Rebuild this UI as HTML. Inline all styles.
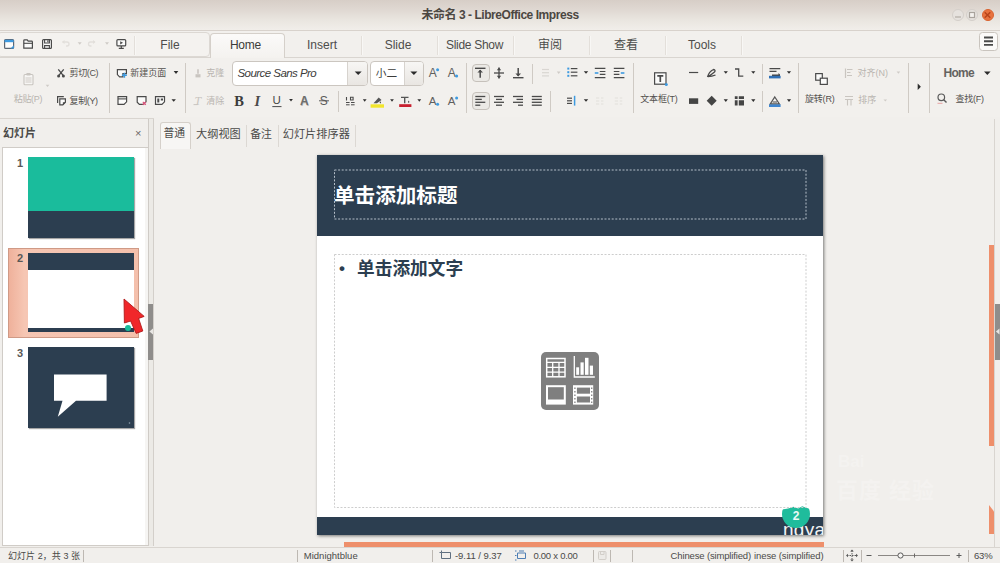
<!DOCTYPE html>
<html lang="zh-CN">
<head>
<meta charset="utf-8">
<title>未命名 3 - LibreOffice Impress</title>
<style>
*{box-sizing:border-box;margin:0;padding:0}
html,body{width:1000px;height:563px;overflow:hidden;background:#f1efec}
body{position:relative;font-family:"Liberation Sans","Noto Sans CJK SC",sans-serif;font-size:11px;color:#4a4a48}
.abs{position:absolute}
#titlebar{left:0;top:0;width:1000px;height:31px;background:linear-gradient(#d7cec7,#e0d9d3 35%,#e9e5df 65%,#f1eeea);border-bottom:1px solid #d8d2cc}
#title{left:0;top:7px;width:1000px;text-align:center;font-weight:bold;font-size:12px;color:#4c4742;letter-spacing:-.45px;line-height:16px}
.wc{width:12px;height:12px;border-radius:50%;top:9px}
#tabbar{left:0;top:31px;width:1000px;height:27px;background:#f2f0ed}
#qa{left:-3px;top:32px;width:213px;height:25px;border:1px solid #dcd8d3;border-radius:4px;background:#f4f2ef}
.tab{top:33.5px;height:24px;line-height:23px;text-align:center;font-size:12px;color:#4d4d4b;width:76px}
.tabsep{top:36px;width:2px;height:19px;background:linear-gradient(90deg,#e3dfda 50%,#f8f7f5 50%)}
#hometab{left:210px;top:32.5px;width:75px;height:25.5px;background:linear-gradient(#fbfaf9,#f4f2ef);border:1px solid #d5d0ca;border-bottom:none;border-radius:4px 4px 0 0;line-height:23px;text-align:left;padding-left:19px;letter-spacing:-.3px;font-size:12px;color:#3c3c3a}
#tabline{left:0;top:57px;width:1000px;height:1px;background:#d9d5d0}
#toolbar{left:0;top:58px;width:1000px;height:59px;background:#f2f0ed}
#tbline{left:0;top:118px;width:154px;height:1px;background:#d9d5d0}
.vsep{width:1px;background:#cfcac4}
.lbl{font-size:9px;color:#53514e;white-space:nowrap;line-height:12px}
.dis{color:#b9b5b0}

.combo{background:#fff;border:1px solid #cbc6c0;border-radius:4px}
.cbtn{position:absolute;right:0;top:0;bottom:0;border-left:1px solid #d7d3ce;background:linear-gradient(#f7f6f4,#e9e6e2);border-radius:0 3px 3px 0}
.pressed{background:#ebe9e5;border:1px solid #c6c1bb;border-radius:4px}
.num{font-size:11px;font-weight:bold;color:#5a5856;width:12px;text-align:center;line-height:16px}
.thumb{width:106px;height:81px;box-shadow:1px 1px 1px rgba(0,0,0,.35)}
.vt{top:126px;font-size:11.2px;color:#4a4a48;line-height:16px;white-space:nowrap}
.st{top:549px;font-size:9.5px;color:#4a4a48;line-height:14px;white-space:nowrap}
.ssep{top:550px;width:1px;height:12px;background:#bdb8b2}
</style>
</head>
<body>
<!-- title bar -->
<div id="titlebar" class="abs"></div>
<div id="title" class="abs">未命名 3 - LibreOffice Impress</div>
<div class="abs wc" style="left:951.6px;background:#e6e2de;border:1px solid #d4cfca"></div>
<div class="abs wc" style="left:966px;background:#e6e2de;border:1px solid #d4cfca"></div>
<div class="abs wc" style="left:981.6px;background:#e8733f;border:1px solid #d9622f"></div>

<!-- tab bar -->
<div id="tabbar" class="abs"></div>
<div id="qa" class="abs"></div>
<div id="tabline" class="abs"></div>
<div class="abs tab" style="left:132px">File</div>
<div id="hometab" class="abs">Home</div>
<div class="abs tab" style="left:284px">Insert</div>
<div class="abs tab" style="left:360px">Slide</div>
<div class="abs tab" style="left:436.5px;letter-spacing:-.3px">Slide Show</div>
<div class="abs tab" style="left:512px">审阅</div>
<div class="abs tab" style="left:588px">查看</div>
<div class="abs tab" style="left:664px">Tools</div>

<div class="abs tabsep" style="left:133.5px"></div><div class="abs tabsep" style="left:361px"></div><div class="abs tabsep" style="left:437px"></div><div class="abs tabsep" style="left:513px"></div><div class="abs tabsep" style="left:589px"></div><div class="abs tabsep" style="left:665px"></div><div class="abs tabsep" style="left:741px"></div>
<!-- toolbar -->
<div id="toolbar" class="abs"></div>
<div id="tbline" class="abs"></div>
<div class="abs vsep" style="left:109px;top:63px;height:50px"></div>
<div class="abs vsep" style="left:185px;top:63px;height:50px"></div>
<div class="abs vsep" style="left:338px;top:91px;height:21px"></div>
<div class="abs vsep" style="left:466px;top:63px;height:50px"></div>
<div class="abs vsep" style="left:532px;top:64px;height:20px"></div>
<div class="abs vsep" style="left:550px;top:91px;height:21px"></div>
<div class="abs vsep" style="left:633px;top:63px;height:50px"></div>
<div class="abs vsep" style="left:762px;top:64px;height:20px"></div>
<div class="abs vsep" style="left:762px;top:91px;height:21px"></div>
<div class="abs vsep" style="left:798px;top:63px;height:50px"></div>
<div class="abs vsep" style="left:908px;top:63px;height:50px"></div>
<div class="abs vsep" style="left:929px;top:63px;height:50px"></div>

<div class="abs lbl dis" style="left:13.8px;top:92.5px;letter-spacing:-0.35px">粘贴(P)</div>
<div class="abs lbl" style="left:69.6px;top:67px;letter-spacing:-0.4px">剪切(C)</div>
<div class="abs lbl" style="left:69.6px;top:95px;letter-spacing:-0.4px">复制(Y)</div>
<div class="abs lbl" style="left:130.2px;top:66.5px">新建页面</div>
<div class="abs lbl dis" style="left:206.2px;top:67px">克隆</div>
<div class="abs lbl dis" style="left:206.2px;top:95px">清除</div>
<div class="abs lbl" style="left:640.3px;top:92.5px;letter-spacing:-0.2px">文本框(T)</div>
<div class="abs lbl" style="left:805px;top:92.5px;letter-spacing:-0.2px">旋转(R)</div>
<div class="abs lbl dis" style="left:857.6px;top:67px">对齐(N)</div>
<div class="abs lbl dis" style="left:858.2px;top:94px">排序</div>
<div class="abs lbl" style="left:955.6px;top:92.5px;letter-spacing:-0.3px">查找(F)</div>
<div class="abs" style="left:943.5px;top:66px;font-size:12px;font-weight:bold;color:#656361;line-height:14px;letter-spacing:-.7px">Home</div>

<!-- font boxes -->
<div class="abs combo" style="left:232px;top:61px;width:136px;height:25px"><span class="cbtn" style="width:20px"></span></div>
<div class="abs" style="left:237.5px;top:66px;font-size:11.5px;font-style:italic;color:#3c3c3a;line-height:14px;letter-spacing:-.55px">Source Sans Pro</div>
<div class="abs combo" style="left:370px;top:61px;width:54px;height:25px"><span class="cbtn" style="width:19px"></span></div>
<div class="abs" style="left:375.8px;top:66px;font-size:10.7px;color:#3c3c3a;line-height:14px">小二</div>

<!-- pressed buttons -->
<div class="abs pressed" style="left:472px;top:64px;width:18px;height:18px"></div>
<div class="abs pressed" style="left:472px;top:92px;width:18px;height:18px"></div>

<!-- slide panel -->
<div class="abs" style="left:0;top:119px;width:155px;height:428px;background:#f1efec"></div>
<div class="abs" style="left:1.5px;top:147px;width:147px;height:398.5px;background:linear-gradient(90deg,#fff 142.5px,#f6f5f3 142.5px);border:1px solid #d0ccc7"></div>
<div class="abs" style="left:148px;top:119px;width:6px;height:427px;background:#eceae6;border-left:1px solid #cfcbc6;border-right:1px solid #d3cfca"></div>
<div class="abs" style="left:3px;top:125px;font-size:11px;font-weight:bold;color:#4a4a48;line-height:16px">幻灯片</div>
<div class="abs" style="left:135px;top:125px;font-size:11px;color:#6a6866;line-height:16px">×</div>

<!-- thumb 1 -->
<div class="abs num" style="left:14px;top:155px">1</div>
<div class="abs thumb" style="left:28px;top:157px;background:#2c3e50"><div class="abs" style="left:0;top:0;width:106px;height:54px;background:#1abc9c"></div></div>
<!-- thumb 2 selected -->
<div class="abs" style="left:8px;top:248px;width:131px;height:89.5px;background:linear-gradient(90deg,#efb19b,#f6c6b3 12%,#f4c0ac);border:1.5px solid #cf9a86"></div>
<div class="abs num" style="left:14px;top:250px">2</div>
<div class="abs thumb" style="left:28px;top:253px;height:79px;background:#fff;box-shadow:none"><div class="abs" style="left:0;top:0;width:106px;height:16.5px;background:#2c3e50"></div><div class="abs" style="left:0;top:75px;width:106px;height:4px;background:#2c3e50"></div><div class="abs" style="left:97px;top:72px;width:6px;height:6px;border-radius:50%;background:#1abc9c"></div></div>
<!-- thumb 3 -->
<div class="abs num" style="left:14px;top:345px">3</div>
<div class="abs thumb" style="left:28px;top:347px;background:#2c3e50"></div>
<!-- panel handle -->
<div class="abs" style="left:148px;top:304px;width:5px;height:56px;background:#8f8d8b"></div>

<!-- view tabs -->
<div class="abs" style="left:160px;top:121.5px;width:31px;height:27.5px;background:#f7f6f4;border:1px solid #d5d0ca;border-bottom:none;border-radius:3px 3px 0 0"></div>
<div class="abs vt" style="left:163.4px;font-size:10.8px;top:125px">普通</div>
<div class="abs vt" style="left:196px">大纲视图</div>
<div class="abs vt" style="left:250.3px;font-size:10.8px">备注</div>
<div class="abs vt" style="left:282.7px">幻灯片排序器</div>
<div class="abs" style="left:246px;top:125px;width:1px;height:22px;background:#dcd8d3"></div>
<div class="abs" style="left:278px;top:125px;width:1px;height:22px;background:#dcd8d3"></div>
<div class="abs" style="left:354.5px;top:125px;width:1px;height:22px;background:#dcd8d3"></div>

<!-- edit area -->
<div class="abs" style="left:317px;top:155px;width:506px;height:380px;background:#fff;box-shadow:1px 1px 3px rgba(0,0,0,.5)"></div>
<div class="abs" style="left:317px;top:155px;width:506px;height:81px;background:#2c3e50"></div>
<div class="abs" style="left:317px;top:517px;width:506px;height:18px;background:#2c3e50;overflow:hidden"><div class="abs" style="left:466px;top:3.5px;font-size:19px;color:#f4f4f4;line-height:18px;letter-spacing:.3px;white-space:nowrap">ngyan</div></div>

<div class="abs" style="left:334px;top:182px;font-size:20.6px;font-weight:bold;color:#fff;line-height:28px;white-space:nowrap">单击添加标题</div>

<div class="abs" style="left:339px;top:256px;font-size:17px;font-weight:bold;color:#2c3e50;line-height:26px">•</div>
<div class="abs" style="left:357px;top:256.3px;font-size:17.7px;font-weight:bold;color:#2c3e50;line-height:26px;white-space:nowrap">单击添加文字</div>
<div class="abs" style="left:541px;top:352px;width:58px;height:58px;border-radius:5px;background:#7f7f7f"></div>
<div class="abs" style="left:782px;top:500px;width:28px;height:28px;border-radius:50%;background:#1fbc9c;clip-path:polygon(0 34%,22% 30%,40% 24%,58% 30%,72% 22%,100% 32%,100% 100%,0 100%)"></div>
<div class="abs" style="left:783px;top:508px;width:26px;text-align:center;font-size:12px;font-weight:bold;color:#e8faf6;line-height:16px">2</div>

<div class="abs" style="left:838px;top:452px;font-size:17px;font-weight:bold;color:rgba(255,255,255,.22);line-height:20px;white-space:nowrap">Bai</div><div class="abs" style="left:836px;top:478px;font-size:22px;font-weight:bold;color:rgba(255,255,255,.22);line-height:26px;white-space:nowrap;letter-spacing:1px">百度 经验</div>
<!-- scrollbars -->
<div class="abs" style="left:994px;top:119px;width:1px;height:428px;background:#d9d5d0"></div>
<div class="abs" style="left:989px;top:245px;width:5px;height:201px;background:#ee8f6b"></div>
<div class="abs" style="left:989px;top:505px;width:5px;height:29px;background:#ee8f6b;clip-path:polygon(0 0,100% 22%,100% 100%,0 100%)"></div>
<div class="abs" style="left:995px;top:304px;width:5px;height:56px;background:#8f8d8b"></div>
<div class="abs" style="left:344px;top:542px;width:480px;height:5px;background:#ee8f6b"></div>

<!-- status bar -->
<div class="abs" style="left:0;top:547px;width:1000px;height:16px;background:#f1efec;border-top:1px solid #d9d5d0"></div>
<div class="abs st" style="left:8px;letter-spacing:0.05px;font-size:9px">幻灯片 2，共 3 张</div>
<div class="abs st" style="left:303.8px;letter-spacing:0px">Midnightblue</div>
<div class="abs st" style="left:455px;letter-spacing:-0.05px">-9.11 / 9.37</div>
<div class="abs st" style="left:533.4px;letter-spacing:-0.25px">0.00 x 0.00</div>
<div class="abs st" style="left:670.6px;letter-spacing:-0.15px">Chinese (simplified)</div>
<div class="abs st" style="left:754px;letter-spacing:-0.1px;background:#f1efec">inese (simplified)</div>
<div class="abs st" style="left:974px;letter-spacing:-0.2px">63%</div>
<div class="abs ssep" style="left:83px"></div><div class="abs ssep" style="left:297px"></div>
<div class="abs ssep" style="left:432px"></div>
<div class="abs ssep" style="left:593px"></div>
<div class="abs ssep" style="left:610px"></div>
<div class="abs ssep" style="left:632px"></div>
<div class="abs ssep" style="left:843px"></div>
<div class="abs ssep" style="left:861px"></div>
<div class="abs ssep" style="left:968px"></div>

<!-- ICONS -->
<svg class="abs" style="left:0;top:0" width="1000" height="563" viewBox="0 0 1000 563" fill="none" stroke-linecap="butt">
<!--ICONS-START-->
<path d="M955 17h6" stroke="#bdb7b1" stroke-width="1.5"/>
<rect x="969.5" y="12.5" width="5" height="5" stroke="#a9a39d" stroke-width="1.2" fill="#f4f2ef"/>
<path d="M984.7 12.2l5.6 5.6M990.3 12.2l-5.6 5.6" stroke="#b8441a" stroke-width="1.5"/>
<rect x="979.5" y="32.5" width="18" height="18" rx="3" fill="#fbfaf9" stroke="#c9c4be"/>
<path d="M984 37.5h9M984 41.2h9M984 44.9h9" stroke="#4a4a4a" stroke-width="1.9"/>
<rect x="4.6" y="39.6" width="9" height="8.8" rx="1" stroke="#5b6673" stroke-width="1.2" fill="#fdfdfd"/>
<path d="M4.6 41h9" stroke="#3d9ae0" stroke-width="2.4"/>
<path d="M10.5 48.6l3.3-3.3v3.3z" fill="#3d9ae0"/>
<path d="M23.8 48.2v-7.6q0-.8.8-.8h2.6l1 1.3h3.4q.8 0 .8.8v6.3z" stroke="#4a4a4a" stroke-width="1.2" fill="#fbfbfa"/>
<path d="M23.8 43.3h8.6" stroke="#4a4a4a" stroke-width="1.1"/>
<rect x="42.6" y="39.6" width="8.8" height="8.8" rx="1" stroke="#4a4a4a" stroke-width="1.2" fill="#fbfbfa"/>
<path d="M44.6 39.8v3.2h4.8v-3.2M44.6 48.2v-2.6h4.8v2.6" stroke="#4a4a4a" stroke-width="1.1"/>
<path d="M47.9 40.2v2" stroke="#4a4a4a" stroke-width="1.2"/>
<path d="M62.5 42h4.5q2 0 2 2t-2 2h-1" stroke="#e2dfdb" stroke-width="1.3"/>
<path d="M64.5 40l-2.5 2 2.5 2z" fill="#e2dfdb"/>
<path d="M77.7 42.3h4l-2.0 2.4z" fill="#cfcbc7"/>
<path d="M95 42h-4.500q-2 0 -2 2t2 2h1" stroke="#e2dfdb" stroke-width="1.3"/>
<path d="M93 40l2.500 2 -2.500 2z" fill="#e2dfdb"/>
<path d="M105.0 42.3h4l-2.0 2.4z" fill="#cfcbc7"/>
<rect x="116.9" y="39.6" width="8.8" height="6.3" rx="1" stroke="#4a4a4a" stroke-width="1.2" fill="#fbfbfa"/>
<path d="M120.2 41.2v3.200l2.800-1.600z" fill="#4a4a4a"/>
<path d="M121.300 46v2M118.800 48.400h5" stroke="#4a4a4a" stroke-width="1.2"/>
<rect x="24" y="74.500" width="9" height="10.300" rx="1" stroke="#c9c5c0" stroke-width="1.1" fill="#f7f6f4"/>
<rect x="26.3" y="73" width="4.400" height="2.600" rx=".8" fill="#c9c5c0"/>
<path d="M25.500 78h6M25.500 80h6M25.500 82h6" stroke="#c9c5c0" stroke-width=".9"/>
<path d="M45.7 84.7h3.6l-1.8 2.2z" fill="#cfcbc7"/>
<path d="M58.300 69.300l4.800 6M63.700 69.300l-4.800 6" stroke="#4a4a4a" stroke-width="1.3"/>
<circle cx="58.600" cy="75.900" r="1.500" fill="#4a4a4a"/><circle cx="63.400" cy="75.900" r="1.500" fill="#4a4a4a"/>
<path d="M57.600 103v-6.300h6.200" stroke="#4a4a4a" stroke-width="1.200"/>
<path d="M59.800 98.800h5.600v3.400l-2.600 2.600h-3z" stroke="#4a4a4a" stroke-width="1.200" fill="#fbfbfa"/>
<path d="M62.900 105v-2.700h2.700z" fill="#4a4a4a"/>
<path d="M117.400 69.600h9v4h-3.500v3.200h-3.300l-2.200-2.200z" stroke="#4a4a4a" stroke-width="1.200" fill="#fbfbfa"/>
<path d="M124.400 72.800v5M121.900 75.300h5" stroke="#3d9ae0" stroke-width="1.500"/>
<path d="M173.7 71.1h4.6l-2.3 2.8z" fill="#2e2e2e"/>
<path d="M118 96.600h8.600v5.200l-2.600 2.600h-6z" stroke="#4a4a4a" stroke-width="1.200" fill="#fbfbfa"/>
<path d="M118 98.900h8.600" stroke="#4a4a4a" stroke-width="1.100"/>
<path d="M137.200 96.600h8.800v5.200l-2.600 2.600h-4l-2.200-2.200z" stroke="#4a4a4a" stroke-width="1.200" fill="#fbfbfa"/>
<path d="M142.800 101.800l3 3M145.800 101.800l-3 3" stroke="#e0507a" stroke-width="1.200"/>
<path d="M155.500 96.600h9v5.200l-2.600 2.600h-6.400z" stroke="#4a4a4a" stroke-width="1.200" fill="#fbfbfa"/>
<path d="M157.300 98.500h2v4h-2zM160.800 98.500h2.200v2h-2.200z" fill="#4a4a4a"/>
<path d="M171.5 99.15h4.4l-2.2 2.7z" fill="#2e2e2e"/>
<path d="M198 69.300v4.500" stroke="#c9c5c0" stroke-width="1.600"/>
<path d="M195.500 74.200h5v3.200h-5z" fill="#c9c5c0"/>
<text x="194.500" y="104.800" font-family="Liberation Serif,serif" font-style="italic" font-size="12" fill="#c9c5c0">T</text>
<path d="M193.500 104.600h4" stroke="#c9c5c0" stroke-width="1"/>
<path d="M354.7 71.4h7l-3.5 3.6z" fill="#2b2b2b"/>
<path d="M410.4 71.4h7l-3.5 3.6z" fill="#2b2b2b"/>
<text x="234.200" y="105.800" font-family="Liberation Serif,serif" font-weight="bold" font-size="14.500" fill="#3c3c3c">B</text>
<text x="254.600" y="105.800" font-family="Liberation Serif,serif" font-weight="bold" font-style="italic" font-size="14.500" fill="#4a4a4a">I</text>
<text x="272.500" y="104.300" font-family="Liberation Sans,sans-serif" font-size="11.500" fill="#4a4a4a">U</text>
<path d="M272.300 106.600h9.200" stroke="#4a4a4a" stroke-width="1"/>
<path d="M289.1 99.1h3.8l-1.9 2.4z" fill="#2e2e2e"/>
<text x="300.600" y="105.900" font-family="Liberation Sans,sans-serif" font-weight="bold" font-size="12" fill="#bdbab6">A</text>
<text x="300" y="105.300" font-family="Liberation Sans,sans-serif" font-weight="bold" font-size="12" fill="#6d6d6d">A</text>
<text x="319.800" y="105.300" font-family="Liberation Sans,sans-serif" font-size="12" fill="#5a5a5a">S</text>
<path d="M319 100.800h10" stroke="#5a5a5a" stroke-width="1"/>
<text x="428.8" y="77.3" font-family="Liberation Sans,sans-serif" font-size="12" fill="#5f5f5f">A</text>
<circle cx="437.6" cy="69.8" r="1.500" fill="#3d9ae0"/>
<text x="447.8" y="77.3" font-family="Liberation Sans,sans-serif" font-size="12" fill="#5f5f5f">A</text>
<circle cx="456.6" cy="76" r="1.500" fill="#3d9ae0"/>
<text x="428.8" y="105.3" font-family="Liberation Sans,sans-serif" font-size="11.5" fill="#5f5f5f">A</text>
<circle cx="437.6" cy="104.3" r="1.500" fill="#3d9ae0"/>
<text x="447.8" y="105.3" font-family="Liberation Sans,sans-serif" font-size="11.5" fill="#5f5f5f">A</text>
<circle cx="456.6" cy="98" r="1.500" fill="#3d9ae0"/>
<path d="M346.500 97v3.500M350.500 97.200h2.600v2.800h-2.600z" stroke="#4a4a4a" stroke-width="1.100"/>
<path d="M346 102.500h3.600M351 102.500h3.600M346 104.800h3.600M351 104.800h3.600" stroke="#4a4a4a" stroke-width="1"/>
<path d="M362.8 99.3h3.8l-1.9 2.4z" fill="#2e2e2e"/>
<path d="M373.500 103.300l5.200-5.800 2.800 2.400-4.600 3.400z" fill="#555"/>
<path d="M380.300 101.200q1.600 1.500 0 2.300q-1.400-.8 0-2.300z" fill="#444"/>
<rect x="370.600" y="104.300" width="13.400" height="3.400" fill="#f2e52c"/>
<path d="M390.1 99.3h3.8l-1.9 2.4z" fill="#2e2e2e"/>
<path d="M401 97.400h7.500M404.700 97.400v5.800" stroke="#555" stroke-width="1.400"/>
<path d="M408.700 100.600q1.500 1.500 0 2.500q-1.500-1 0-2.500z" fill="#444"/>
<rect x="399.200" y="104.200" width="12.200" height="2.800" fill="#c8202f"/>
<path d="M417.40000000000003 99.3h3.8l-1.9 2.4z" fill="#2e2e2e"/>
<path d="M475 68.300h10.500" stroke="#4a4a4a" stroke-width="1.400"/><path d="M480.200 70v7.800" stroke="#4a4a4a" stroke-width="1.500"/><path d="M477.400 72.600l2.800-2.900 2.800 2.900z" fill="#4a4a4a"/>
<path d="M494 73h10" stroke="#4a4a4a" stroke-width="1.300"/><path d="M499 67.600v10.800" stroke="#4a4a4a" stroke-width="1.300"/><path d="M496.800 70.200l2.200-2.600 2.200 2.600zM496.800 75.800l2.200 2.600 2.200-2.600z" fill="#4a4a4a"/>
<path d="M513 77.700h10.500" stroke="#4a4a4a" stroke-width="1.400"/><path d="M518.200 68v8" stroke="#4a4a4a" stroke-width="1.500"/><path d="M515.400 73.600l2.800 2.900 2.800-2.900z" fill="#4a4a4a"/>
<path d="M542 69.5h7" stroke="#d9d6d2" stroke-width="1.2"/>
<path d="M542 72.7h7" stroke="#d9d6d2" stroke-width="1.2"/>
<path d="M542 75.9h7" stroke="#d9d6d2" stroke-width="1.2"/>
<path d="M556.8000000000001 71.5h3.8l-1.9 2.4z" fill="#cfcbc7"/>
<rect x="567.300" y="67.6" width="2" height="2" fill="#3d9ae0"/>
<path d="M570.800 68.6h6.600" stroke="#4a4a4a" stroke-width="1.200"/>
<rect x="567.300" y="71.19999999999999" width="2" height="2" fill="#3d9ae0"/>
<path d="M570.800 72.19999999999999h6.600" stroke="#4a4a4a" stroke-width="1.200"/>
<rect x="567.300" y="74.8" width="2" height="2" fill="#3d9ae0"/>
<path d="M570.800 75.8h6.600" stroke="#4a4a4a" stroke-width="1.200"/>
<path d="M583.8 71.15h4.4l-2.2 2.7z" fill="#2e2e2e"/>
<path d="M594.800 68.300h10.600M599.800 71.500h5.600M599.800 74.400h5.600M594.800 77.600h10.600" stroke="#4a4a4a" stroke-width="1.200"/><path d="M594.800 73h3.600" stroke="#3d9ae0" stroke-width="1.600"/>
<path d="M613.800 68.300h10.600M613.800 71.500h5.600M613.800 74.400h5.600M613.800 77.600h10.600" stroke="#4a4a4a" stroke-width="1.200"/><path d="M620.800 73h3.600" stroke="#3d9ae0" stroke-width="1.600"/>
<path d="M475.3 96.5h10" stroke="#4a4a4a" stroke-width="1.3"/>
<path d="M475.3 99.4h6.5" stroke="#4a4a4a" stroke-width="1.3"/>
<path d="M475.3 102.3h10" stroke="#4a4a4a" stroke-width="1.3"/>
<path d="M475.3 105.2h5" stroke="#4a4a4a" stroke-width="1.3"/>
<path d="M494.0 96.5h10" stroke="#4a4a4a" stroke-width="1.3"/>
<path d="M496.0 99.4h6" stroke="#4a4a4a" stroke-width="1.3"/>
<path d="M494.0 102.3h10" stroke="#4a4a4a" stroke-width="1.3"/>
<path d="M496.0 105.2h6" stroke="#4a4a4a" stroke-width="1.3"/>
<path d="M513 96.5h10" stroke="#4a4a4a" stroke-width="1.3"/>
<path d="M516.5 99.4h6.5" stroke="#4a4a4a" stroke-width="1.3"/>
<path d="M513 102.3h10" stroke="#4a4a4a" stroke-width="1.3"/>
<path d="M518 105.2h5" stroke="#4a4a4a" stroke-width="1.3"/>
<path d="M531.8 96.5h10" stroke="#4a4a4a" stroke-width="1.3"/>
<path d="M531.8 99.4h10" stroke="#4a4a4a" stroke-width="1.3"/>
<path d="M531.8 102.3h10" stroke="#4a4a4a" stroke-width="1.3"/>
<path d="M531.8 105.2h10" stroke="#4a4a4a" stroke-width="1.3"/>
<path d="M567 98.2h5" stroke="#4a4a4a" stroke-width="1.2"/>
<path d="M567 100.8h5" stroke="#4a4a4a" stroke-width="1.2"/>
<path d="M567 103.4h5" stroke="#4a4a4a" stroke-width="1.2"/>
<path d="M574.600 95.800v9.800" stroke="#3d9ae0" stroke-width="1.500"/>
<path d="M583.8 99.15h4.4l-2.2 2.7z" fill="#2e2e2e"/>
<path d="M596 98h3.200M601 98h2.400M596 101h3.200M601 101h2.400M596 104h3.200M601 104h2.400" stroke="#e2dfdb" stroke-width="1.100"/>
<path d="M614.800 98h3.200M619.800 98h2.400M614.800 101h3.200M619.800 101h2.400M614.800 104h3.200M619.800 104h2.400" stroke="#e2dfdb" stroke-width="1.100"/>
<rect x="654.600" y="72.800" width="11.400" height="11.400" stroke="#4a4a4a" stroke-width="1.200" fill="#fbfbfa"/>
<path d="M657.300 75.800h6M660.300 75.800v6.200" stroke="#4a4a4a" stroke-width="1.700"/>
<circle cx="666.300" cy="84.500" r="1.500" fill="#3d9ae0"/>
<path d="M689 72.500h9.200" stroke="#4a4a4a" stroke-width="1.200"/>
<path d="M707.500 77q1.500-5.500 6-7.500q2.500.5 1 2.500q-3.500 3-6.500 4.500q4 0 7.500-1.500" stroke="#4a4a4a" stroke-width="1.300"/>
<path d="M723.6999999999999 71.2h4.2l-2.1 2.6z" fill="#2e2e2e"/>
<path d="M735 69h3.700v7.200h4.600" stroke="#4a4a4a" stroke-width="1.300"/>
<path d="M751.1999999999999 71.2h4.2l-2.1 2.6z" fill="#2e2e2e"/>
<path d="M769.500 68.600h10.800M769.500 71.400h7" stroke="#4a4a4a" stroke-width="1.300"/>
<path d="M772 74.500h6.500v-1.500l1.500 1.500v1.500h-8z" fill="#444"/>
<rect x="769" y="75.800" width="11.600" height="2.600" fill="#2f6fb5"/>
<path d="M786.9 71.2h4.2l-2.1 2.6z" fill="#2e2e2e"/>
<rect x="689" y="98.300" width="9.200" height="5.600" fill="#454545"/>
<path d="M711.700 95.800l5 5-5 5-5-5z" fill="#454545"/>
<path d="M723.6999999999999 99.3h4.2l-2.1 2.6z" fill="#2e2e2e"/>
<path d="M734.800 96.300h2.800v2.800h-2.800zM738.800 96.300h5.200v2.800h-5.200zM734.800 100.300h2.800v5.200h-2.800zM738.800 100.300h5.200v5.200h-5.200z" fill="#454545"/>
<path d="M751.1999999999999 99.3h4.2l-2.1 2.6z" fill="#2e2e2e"/>
<path d="M774.800 97l4.600 7h-9.200z" stroke="#555" stroke-width="1.300" fill="#f5f4f2"/>
<path d="M772.600 102h4.400" stroke="#555" stroke-width="1.100"/>
<rect x="769" y="104.400" width="11.600" height="2.600" fill="#3f86d0"/>
<path d="M786.9 99.3h4.2l-2.1 2.6z" fill="#2e2e2e"/>
<rect x="815.700" y="73.600" width="6.600" height="6.600" stroke="#4a4a4a" stroke-width="1.200" fill="#fbfbfa"/>
<rect x="820.300" y="78.200" width="7" height="6.200" stroke="#4a4a4a" stroke-width="1.200" fill="#fbfbfa"/>
<path d="M845.500 68.500v9.500M847 69.500h5.500M847 72.500h3.500M847 75.500h5" stroke="#c9c5c0" stroke-width="1.200"/>
<path d="M896.6 71.5h3.6l-1.8 2.2z" fill="#cfcbc7"/>
<path d="M845 96.500h8M845 99.500h8M847.500 99.500v6M851 99.500v6" stroke="#c9c5c0" stroke-width="1.100"/>
<path d="M883.5 99.4h3.6l-1.8 2.2z" fill="#cfcbc7"/>
<path d="M917.700 83.600l3.200 3.200-3.200 3.200z" fill="#2e2e2e"/>
<path d="M984.0 71.4h6.6l-3.3 3.6z" fill="#2b2b2b"/>
<circle cx="941.300" cy="97.300" r="3.300" stroke="#5a5a5a" stroke-width="1.200"/><path d="M943.700 99.700l2.800 2.800" stroke="#5a5a5a" stroke-width="1.400"/>
<path d="M937.500 103.300h5" stroke="#e6a3a3" stroke-width="1"/>
<path d="M54 374.500h52.600v26.200h-30.600l-18.200 16 4.700-16h-8.500z" fill="#fff"/>
<circle cx="129.500" cy="423" r=".8" fill="#8fa0ae"/>
<path d="M153 328.500l-3.600 3 3.600 3z" fill="#e8e6e3"/>
<path d="M999.500 328.500l-3.600 3 3.600 3z" fill="#e8e6e3"/>
<path d="M124 299L124.4 323L130.6 321L136.2 333.4L142.8 331L138.6 318.4L144.2 316.4Z" fill="#f0272a" stroke="#b01818" stroke-width=".9" stroke-linejoin="round"/>
<rect x="334.5" y="170" width="471.5" height="49" stroke="#b4bec8" stroke-width="1" stroke-dasharray="2 1.6"/>
<rect x="334.5" y="254.5" width="471.5" height="253" stroke="#cdcdcd" stroke-width="1" stroke-dasharray="2 1.6"/>
<rect x="546.7" y="358.5" width="18.3" height="18.3" fill="none" stroke="#fff" stroke-width="1.5"/>
<path d="M546.7 362.4h18.3M546.7 367.3h18.3M546.7 372.200h18.300" stroke="#fff" stroke-width="1.300"/>
<path d="M552.700 362.400v14.400M559 362.400v14.400" stroke="#fff" stroke-width="1.300"/>
<path d="M574.300 356v21h20.500" stroke="#fff" stroke-width="1.300" fill="none"/>
<rect x="576.200" y="367.300" width="2.900" height="7.500" fill="#fff"/><rect x="580.500" y="362.400" width="3.200" height="12.400" fill="#fff"/><rect x="585" y="357.800" width="3.500" height="17" fill="#fff"/><rect x="589.800" y="365.600" width="3.200" height="9.200" fill="#fff"/>
<rect x="546" y="385.200" width="19.800" height="19.400" fill="#fff"/>
<rect x="548" y="387.200" width="15.800" height="12.300" fill="#7f7f7f"/>
<rect x="573" y="385.200" width="20.200" height="19.400" fill="#fff"/>
<rect x="576.900" y="387.600" width="13.100" height="6.100" fill="#7f7f7f"/><rect x="576.900" y="396.500" width="13.100" height="6" fill="#7f7f7f"/>
<rect x="574.200" y="387.5" width="1.400" height="1.500" fill="#8a8a8a"/><rect x="591" y="387.5" width="1.400" height="1.500" fill="#8a8a8a"/>
<rect x="574.200" y="391" width="1.400" height="1.500" fill="#8a8a8a"/><rect x="591" y="391" width="1.400" height="1.500" fill="#8a8a8a"/>
<rect x="574.200" y="394.5" width="1.400" height="1.500" fill="#8a8a8a"/><rect x="591" y="394.5" width="1.400" height="1.500" fill="#8a8a8a"/>
<rect x="574.200" y="398" width="1.400" height="1.500" fill="#8a8a8a"/><rect x="591" y="398" width="1.400" height="1.500" fill="#8a8a8a"/>
<rect x="574.200" y="401.5" width="1.400" height="1.500" fill="#8a8a8a"/><rect x="591" y="401.5" width="1.400" height="1.500" fill="#8a8a8a"/>
<path d="M441.500 552.500h9v6h-9zM439.500 552.500h2M441.500 550.500v2" stroke="#5f6f80" stroke-width="1"/>
<path d="M517.500 553h8v5.500h-8zM515 551h1.500M515 555.500h1.500M515 560h1.500M519 551h5" stroke="#4f7fb5" stroke-width="1"/>
<rect x="598.500" y="551.500" width="7.500" height="8" rx="1" stroke="#d2cec9" stroke-width="1" fill="#eceae7"/><path d="M600.500 552v2.500h3.500V552" stroke="#d2cec9" stroke-width="1"/>
<path d="M852 550.500v10M847 555.500h10" stroke="#5a5a5a" stroke-width="1" stroke-dasharray="1.5 1"/><path d="M852 549.500l-1.800 2h3.600zM852 561.500l-1.800-2h3.600zM846 555.500l2-1.800v3.600zM858 555.500l-2-1.800v3.600z" fill="#5a5a5a"/>
<path d="M866.500 555.500h5" stroke="#5a5a5a" stroke-width="1"/>
<path d="M878 555.500h72" stroke="#8a8784" stroke-width="1"/>
<path d="M914.500 553.500v4" stroke="#6a6866" stroke-width="1"/>
<circle cx="900.500" cy="555.500" r="2.600" fill="#f6f5f3" stroke="#5a5a5a" stroke-width="1"/>
<path d="M956.500 555.500h5M959 553v5" stroke="#5a5a5a" stroke-width="1"/>
<!--ICONS-END-->
</svg>
</body>
</html>
